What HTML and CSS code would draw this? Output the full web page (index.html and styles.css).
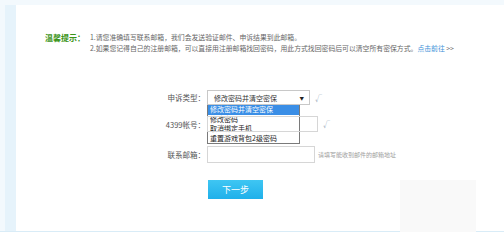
FILE: index.html
```html
<!DOCTYPE html>
<html>

<head>
  <meta charset="utf-8">
  <meta name="viewport" content="width=device-width, initial-scale=1">
  <link rel="stylesheet" href="styles.css">
</head>

<body>
  <div class="outer">
    <div class="panel">

      <!-- tips -->
      <div class="tips">
        <div class="tips-title">温馨提示：</div>
        <div class="tips-text">
          <p>1.请您准确填写联系邮箱，我们会发送验证邮件、申诉结果到此邮箱。</p>
          <p>2.如果您记得自己的注册邮箱，可以直接用注册邮箱找回密码，用此方式找回密码后可以清空所有密保方式。<a href="#">点击前往</a> &gt;&gt;</p>
        </div>
      </div>

      <form class="form">
        <div class="row row-type">
          <label class="label">申诉类型：</label>
          <div class="field">
            <div class="select">
              <span>修改密码并清空密保</span>
              <span class="arrow">▼</span>
            </div>
            <span class="ok">√</span>

            <!-- open dropdown -->
            <ul class="options">
              <li class="active">修改密码并清空密保</li>
              <li>修改密码</li>
              <li>取消绑定手机</li>
              <li>重置游戏背包2级密码</li>
            </ul>
          </div>
        </div>

        <div class="row row-account">
          <label class="label">4399帐号：</label>
          <div class="field">
            <div class="input"></div>
            <span class="ok">√</span>
          </div>
        </div>

        <div class="row row-mail">
          <label class="label">联系邮箱：</label>
          <div class="field">
            <div class="input input-mail"></div>
            <span class="hint">请填写能收到邮件的邮箱地址</span>
          </div>
        </div>

        <div class="row row-btn">
          <span class="label"></span>
          <div class="field">
            <button type="button" class="nextbtn">下一步</button>
          </div>
        </div>
      </form>

    </div>
    <div class="blot"></div>
  </div>
</body>

</html>
```

FILE: styles.css
```css
* {
  box-sizing: border-box;
}

body {
  margin: 0;
  background: #fff;
  font-family: "Noto Sans CJK SC", "DejaVu Sans", sans-serif;
  color: #555;
}

/* light blue frame round the white panel */
.outer {
  position: relative;
  height: 232px;
  padding: 5px 0 0 5px;
  background: #f3f9fd;
  border-bottom: 1px solid #d9ecf7;
}

.panel {
  height: 226px;
  border-left: 11px solid #e6f3fb;
  background: #fff;
  overflow: hidden;
}

/* tips block */
.tips {
  display: flex;
  padding: 28px 0 0 29px;
}

.tips-title {
  width: 45px;
  font-size: 8px;
  font-weight: bold;
  color: #3a9418;
  line-height: 10px;
}

.tips-text p {
  margin: 0;
  font-size: 6.85px;
  line-height: 11px;
  color: #666;
  white-space: nowrap;
}

.tips-text p:first-child {
  margin-top: -1px;
}

.tips-text a {
  color: #3d8fd8;
  text-decoration: none;
}

/* form */
.form {
  margin-top: 36px;
}

.row {
  display: grid;
  grid-template-columns: 190px auto;
  align-items: center;
}

.label {
  text-align: right;
  font-size: 7.5px;
  color: #555;
  padding-right: 1px;
}

.field {
  position: relative;
  display: flex;
  align-items: center;
  padding-left: 1px;
}

.row-type {
  height: 15px;
}

.row-account {
  height: 16px;
  margin-top: 11px;
}

.row-mail {
  height: 17px;
  margin-top: 14px;
}

.row-btn {
  margin-top: 17px;
}

.select {
  display: flex;
  align-items: center;
  justify-content: space-between;
  width: 103px;
  height: 15px;
  padding: 0 5px 0 6px;
  border: 1px solid #c8c8c8;
  font-size: 7px;
  color: #333;
}

.arrow {
  font-size: 4.5px;
  color: #222;
}

.input {
  width: 111px;
  height: 16px;
  border: 1px solid #d6d6d6;
}

.input-mail {
  width: 108px;
  height: 17px;
}

.ok {
  margin-left: 5px;
  font-size: 7px;
  color: #8aa3b5;
}

.hint {
  margin-left: 3px;
  font-size: 6px;
  color: #a0a0a0;
}

/* open select list, drawn over the rows below */
.options {
  position: absolute;
  left: 1px;
  top: 15px;
  width: 93px;
  margin: 0;
  padding: 0;
  list-style: none;
  background: #fff;
  border: 1px solid #7a7a7a;
  border-top: none;
}

.options li {
  display: block;
  height: 9.5px;
  line-height: 9.5px;
  padding-left: 2px;
  font-size: 7px;
  color: #222;
  overflow: hidden;
}

.options li.active {
  background: #3a8ee6;
  color: #fff;
}

.nextbtn {
  width: 55px;
  height: 19px;
  margin-left: 1px;
  border: none;
  background: linear-gradient(#3fc6f3, #1fb0ea);
  color: #fff;
  font-family: inherit;
  font-size: 9px;
  cursor: pointer;
}

/* faint watermark smudge in the corner */
.blot {
  position: absolute;
  left: 400px;
  top: 180px;
  width: 76px;
  height: 54px;
  background: #f9f9f9;
}
```
